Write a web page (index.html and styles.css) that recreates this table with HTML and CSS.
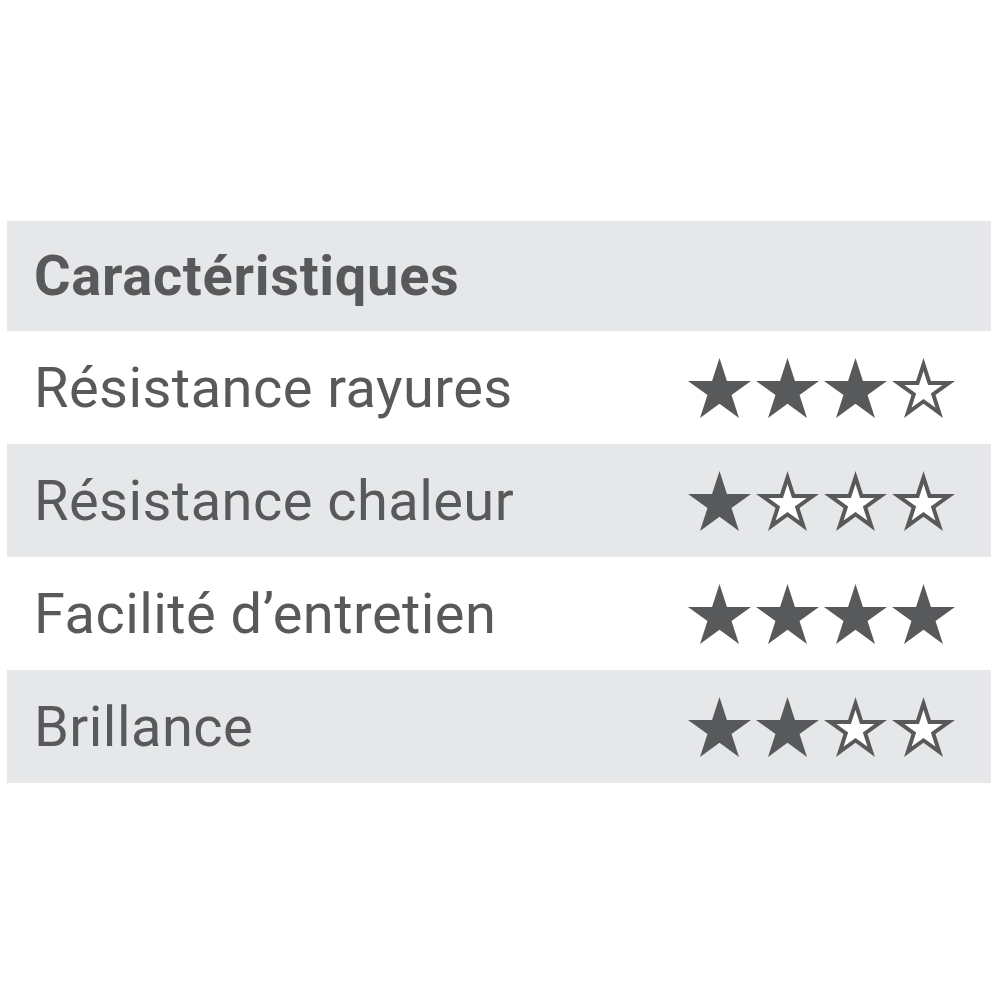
FILE: index.html
```html
<!DOCTYPE html>
<html lang="fr">
<head>
<meta charset="utf-8">
<link rel="stylesheet" href="styles.css">
<title>Caractéristiques</title>
</head>
<body>
<svg width="0" height="0" class="defs">
  <defs>
    <polygon id="star" points="50,0 61.23,34.55 97.55,34.55 68.16,55.90 79.39,90.45 50,69.1 20.61,90.45 31.84,55.90 2.45,34.55 38.77,34.55"/>
    <clipPath id="starclip"><use href="#star"/></clipPath>
  </defs>
</svg>
<div class="table">
  <div class="row head"><span class="label">Caractéristiques</span></div>
  <div class="row">
    <span class="label">Résistance rayures</span>
    <span class="stars">
      <svg class="star full" viewBox="2.45 0 95.1 90.45"><use href="#star"/></svg>
      <svg class="star full" viewBox="2.45 0 95.1 90.45"><use href="#star"/></svg>
      <svg class="star full" viewBox="2.45 0 95.1 90.45"><use href="#star"/></svg>
      <svg class="star empty" viewBox="2.45 0 95.1 90.45"><use href="#star" clip-path="url(#starclip)"/></svg>
    </span>
  </div>
  <div class="row alt">
    <span class="label">Résistance chaleur</span>
    <span class="stars">
      <svg class="star full" viewBox="2.45 0 95.1 90.45"><use href="#star"/></svg>
      <svg class="star empty" viewBox="2.45 0 95.1 90.45"><use href="#star" clip-path="url(#starclip)"/></svg>
      <svg class="star empty" viewBox="2.45 0 95.1 90.45"><use href="#star" clip-path="url(#starclip)"/></svg>
      <svg class="star empty" viewBox="2.45 0 95.1 90.45"><use href="#star" clip-path="url(#starclip)"/></svg>
    </span>
  </div>
  <div class="row">
    <span class="label">Facilité d’entretien</span>
    <span class="stars">
      <svg class="star full" viewBox="2.45 0 95.1 90.45"><use href="#star"/></svg>
      <svg class="star full" viewBox="2.45 0 95.1 90.45"><use href="#star"/></svg>
      <svg class="star full" viewBox="2.45 0 95.1 90.45"><use href="#star"/></svg>
      <svg class="star full" viewBox="2.45 0 95.1 90.45"><use href="#star"/></svg>
    </span>
  </div>
  <div class="row alt">
    <span class="label">Brillance</span>
    <span class="stars">
      <svg class="star full" viewBox="2.45 0 95.1 90.45"><use href="#star"/></svg>
      <svg class="star full" viewBox="2.45 0 95.1 90.45"><use href="#star"/></svg>
      <svg class="star empty" viewBox="2.45 0 95.1 90.45"><use href="#star" clip-path="url(#starclip)"/></svg>
      <svg class="star empty" viewBox="2.45 0 95.1 90.45"><use href="#star" clip-path="url(#starclip)"/></svg>
    </span>
  </div>
</div>
</body>
</html>
```
FILE: styles.css
```css
html, body {
  margin: 0;
  padding: 0;
  background: #ffffff;
}
body {
  width: 1000px;
  height: 1000px;
  font-family: Roboto, "Liberation Sans", sans-serif;
  color: #58595b;
}
.defs {
  position: absolute;
  width: 0;
  height: 0;
}
.table {
  margin: 221px 9px 0 7px;
  display: flex;
  flex-direction: column;
}
.row {
  height: 113px;
  display: flex;
  align-items: center;
  justify-content: space-between;
  padding: 0 36px 0 27px;
}
.row.head {
  height: 110px;
  background: #e6e7e8;
}
.row.alt {
  background: #e6e7e8;
}
.label {
  font-size: 56px;
  letter-spacing: 0.45px;
  font-weight: 400;
}
.head .label {
  font-weight: 700;
  letter-spacing: 0.7px;
}
.stars {
  display: flex;
  gap: 5px;
}
.star {
  width: 63px;
  height: 60px;
}
.star.full use {
  fill: #58595b;
}
.star.empty use {
  fill: #ffffff;
  stroke: #58595b;
  stroke-width: 12;
  stroke-linejoin: miter;
}
```
